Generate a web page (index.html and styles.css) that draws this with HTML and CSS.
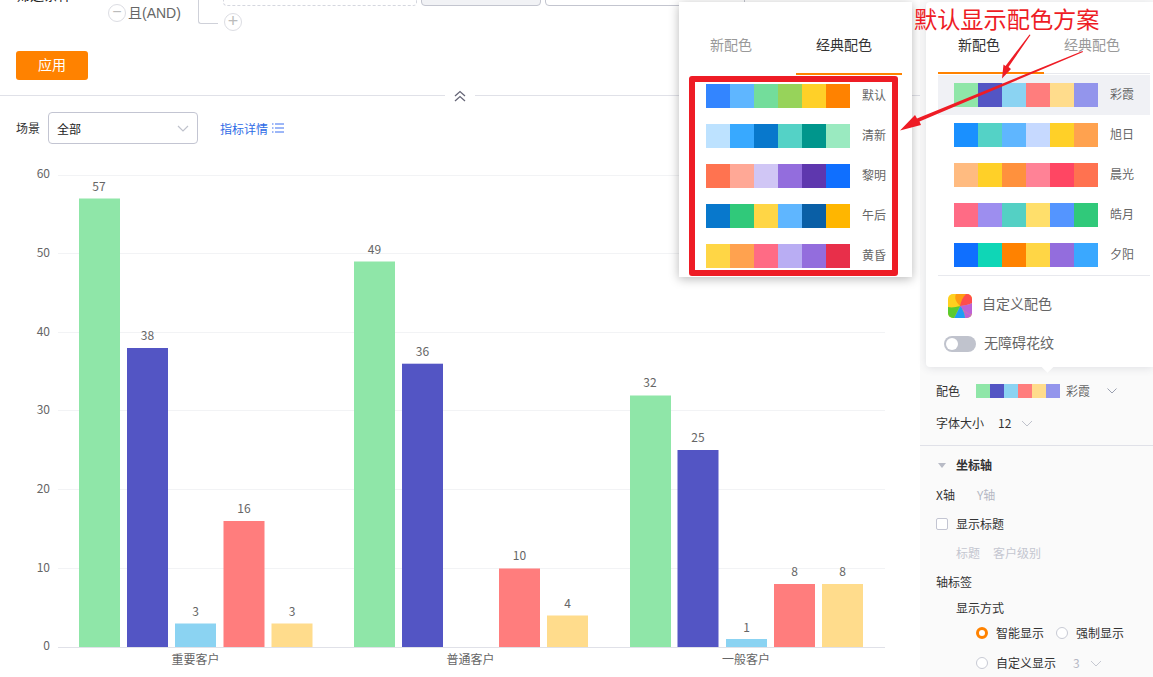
FILE: index.html
```html
<!DOCTYPE html>
<html lang="zh-CN">
<head>
<meta charset="utf-8">
<title>配色方案</title>
<link rel="stylesheet" href="styles.css">
</head>
<body>
<div class="stage">
  <main class="main">
    <section class="topbar">
      <div class="filters">
        <div class="filter-label">筛选条件</div>
        <div class="logic"><span class="circle-btn">−</span><span class="logic-text">且(AND)</span></div>
        <div class="bracket"></div>
        <div class="conditions">
          <div class="cond-row">
            <div class="cond dashed"></div>
            <div class="cond filled"></div>
            <div class="cond outlined"></div>
          </div>
          <span class="circle-btn plus">+</span>
        </div>
      </div>
      <button class="apply">应用</button>
    </section>
    <div class="divider">
      <span class="collapse">
        <svg width="14" height="12" viewBox="0 0 14 12"><path d="M2 6 7 1.500 12 6M2 11 7 6.500 12 11" fill="none" stroke="#667" stroke-width="1.300"/></svg>
      </span>
    </div>
    <div class="toolbar">
      <span class="tool-label">场景</span>
      <div class="select"><span>全部</span>
        <svg class="chev" width="12" height="7" viewBox="0 0 12 7"><path d="M1 1 6 6 11 1" fill="none" stroke="#bfc2cc" stroke-width="1.200"/></svg>
      </div>
      <a class="link">指标详情
        <svg width="12" height="10" viewBox="0 0 12 10"><path d="M3 1h9M3 5h9M3 9h9" stroke="#3a6ff0" fill="none"/><path d="M0 1h1.500M0 5h1.500M0 9h1.500" stroke="#3a6ff0" fill="none"/></svg>
      </a>
    </div>
    <svg class="chart" viewBox="0 150 920 527" width="920" height="527">
      <g class="grid">
        <path d="M58 175.500H885M58 253.500H885M58 332.500H885M58 410.500H885M58 489.500H885M58 568.500H885"/>
      </g>
      <path class="axis" d="M58 647.500H885"/>
      <g class="ticks">
        <text x="50" y="178">60</text><text x="50" y="257">50</text><text x="50" y="336">40</text>
        <text x="50" y="414">30</text><text x="50" y="493">20</text><text x="50" y="572">10</text><text x="50" y="650">0</text>
      </g>
      <g class="s1"><rect x="79" y="198.500" width="41" height="448.500"/><rect x="354" y="261.500" width="41" height="385.500"/><rect x="630" y="395.500" width="41" height="251.500"/></g>
      <g class="s2"><rect x="127" y="348" width="41" height="299"/><rect x="402" y="363.700" width="41" height="283.300"/><rect x="677.500" y="450" width="41" height="197"/></g>
      <g class="s3"><rect x="175" y="623.500" width="41" height="23.500"/><rect x="726" y="639" width="41" height="8"/></g>
      <g class="s4"><rect x="223.500" y="521" width="41" height="126"/><rect x="499" y="568.500" width="41" height="78.500"/><rect x="774" y="584" width="41" height="63"/></g>
      <g class="s5"><rect x="271.500" y="623.500" width="41" height="23.500"/><rect x="547" y="615.500" width="41" height="31.500"/><rect x="822" y="584" width="41" height="63"/></g>
      <g class="vals">
        <text x="99" y="191">57</text><text x="147.500" y="340">38</text><text x="195.500" y="616">3</text><text x="244" y="513">16</text><text x="292" y="616">3</text>
        <text x="374.500" y="254">49</text><text x="422.500" y="356">36</text><text x="519.500" y="560">10</text><text x="567.500" y="608">4</text>
        <text x="650" y="387">32</text><text x="698" y="442">25</text><text x="746.500" y="632">1</text><text x="794.500" y="576">8</text><text x="842.500" y="576">8</text>
      </g>
      <g class="cats"><text x="195.500" y="664">重要客户</text><text x="470.500" y="664">普通客户</text><text x="746" y="664">一般客户</text></g>
    </svg>
  </main>

  <aside class="panel">
    <div class="prow first">
      <span class="plabel">配色</span>
      <span class="swatches mini"><i class="c-a1"></i><i class="c-a2"></i><i class="c-a3"></i><i class="c-a4"></i><i class="c-a5"></i><i class="c-a6"></i></span>
      <span class="pval">彩霞</span>
      <svg class="pchev" width="10" height="6" viewBox="0 0 10 6"><path d="M.5.5 5 5 9.500.5" fill="none" stroke="#9aa0b0"/></svg>
    </div>
    <div class="prow second">
      <span>字体大小</span><span class="fontnum">12</span>
      <svg width="12" height="7" viewBox="0 0 12 7"><path d="M1 1 6 6 11 1" fill="none" stroke="#bfc2cc"/></svg>
    </div>
    <div class="psection">
      <div class="prow head"><span class="tri"></span><strong>坐标轴</strong></div>
      <div class="prow gap10"><span>X轴</span><span class="muted yaxis">Y轴</span></div>
      <div class="prow gap9"><span class="check"></span><span>显示标题</span></div>
      <div class="prow gap9 indent muted-light"><span>标题</span><span class="titleval">客户级别</span></div>
      <div class="prow gap9"><span>轴标签</span></div>
      <div class="prow gap6 indent"><span>显示方式</span></div>
      <div class="prow gap5 indent2">
        <span class="radio on"></span><span class="rlabel">智能显示</span>
        <span class="radio"></span><span>强制显示</span>
      </div>
      <div class="prow gap10 indent2">
        <span class="radio"></span><span class="rlabel">自定义显示</span><span class="muted num3">3</span>
        <svg width="12" height="7" viewBox="0 0 12 7"><path d="M1 1 6 6 11 1" fill="none" stroke="#c6c9d2"/></svg>
      </div>
    </div>
  </aside>

  <div class="pop pop-classic">
    <div class="tabs">
      <span class="tab">新配色</span><span class="tab active">经典配色</span>
    </div>
    <div class="pal"><span class="swatches"><i class="c-b1"></i><i class="c-b2"></i><i class="c-b3"></i><i class="c-b4"></i><i class="c-b5"></i><i class="c-b6"></i></span><span class="pal-name">默认</span></div>
    <div class="pal"><span class="swatches"><i class="c-c1"></i><i class="c-c2"></i><i class="c-c3"></i><i class="c-c4"></i><i class="c-c5"></i><i class="c-c6"></i></span><span class="pal-name">清新</span></div>
    <div class="pal"><span class="swatches"><i class="c-d1"></i><i class="c-d2"></i><i class="c-d3"></i><i class="c-d4"></i><i class="c-d5"></i><i class="c-d6"></i></span><span class="pal-name">黎明</span></div>
    <div class="pal"><span class="swatches"><i class="c-e1"></i><i class="c-e2"></i><i class="c-e3"></i><i class="c-e4"></i><i class="c-e5"></i><i class="c-e6"></i></span><span class="pal-name">午后</span></div>
    <div class="pal"><span class="swatches"><i class="c-f1"></i><i class="c-f2"></i><i class="c-f3"></i><i class="c-f4"></i><i class="c-f5"></i><i class="c-f6"></i></span><span class="pal-name">黄昏</span></div>
  </div>

  <div class="pop pop-new">
    <div class="tabs">
      <span class="tab active">新配色</span><span class="tab">经典配色</span>
    </div>
    <div class="pal selected"><span class="swatches"><i class="c-a1"></i><i class="c-a2"></i><i class="c-a3"></i><i class="c-a4"></i><i class="c-a5"></i><i class="c-a6"></i></span><span class="pal-name">彩霞</span></div>
    <div class="pal"><span class="swatches"><i class="c-g1"></i><i class="c-g2"></i><i class="c-g3"></i><i class="c-g4"></i><i class="c-g5"></i><i class="c-g6"></i></span><span class="pal-name">旭日</span></div>
    <div class="pal"><span class="swatches"><i class="c-h1"></i><i class="c-h2"></i><i class="c-h3"></i><i class="c-h4"></i><i class="c-h5"></i><i class="c-h6"></i></span><span class="pal-name">晨光</span></div>
    <div class="pal"><span class="swatches"><i class="c-j1"></i><i class="c-j2"></i><i class="c-j3"></i><i class="c-j4"></i><i class="c-j5"></i><i class="c-j6"></i></span><span class="pal-name">皓月</span></div>
    <div class="pal"><span class="swatches"><i class="c-k1"></i><i class="c-k2"></i><i class="c-k3"></i><i class="c-k4"></i><i class="c-k5"></i><i class="c-k6"></i></span><span class="pal-name">夕阳</span></div>
    <div class="custom-row">
      <svg width="24" height="24" viewBox="0 0 24 24" class="wheel">
        <defs><clipPath id="wheelclip"><rect width="24" height="24" rx="5"/></clipPath></defs>
        <g clip-path="url(#wheelclip)">
          <rect width="24" height="24" fill="#ffd01f"/>
          <path d="M12 12C8 8 6 4 8 0H18C17 5 15 9 12 12Z" fill="#ff9c12"/>
          <path d="M12 12C13 7 15 3 18 0H24V9C20 11 16 12 12 12Z" fill="#ff4d4d"/>
          <path d="M12 12C16 11 20 11 24 9V21C20 20 15 17 12 12Z" fill="#bd62d6"/>
          <path d="M12 12C15 15 17 20 17 24H24V21C20 20 15 17 12 12Z" fill="#bd62d6"/>
          <path d="M12 12C15 15 17 20 17 24H6C8 20 10 16 12 12Z" fill="#1f9cf5"/>
          <path d="M12 12C10 16 8 20 6 24H0V13C4 14 8 13 12 12Z" fill="#5acb2f"/>
        </g>
      </svg>
      <span class="row-text">自定义配色</span>
    </div>
    <div class="toggle-row"><span class="toggle"><span class="knob"></span></span><span class="row-text">无障碍花纹</span></div>
  </div>
  <span class="caret"></span>

  <div class="note-box"></div>
  <div class="note-text">默认显示配色方案</div>
  <svg class="arrows" width="1153" height="677" viewBox="0 0 1153 677">
    <path d="M1030.500 35 1008.500 67 1011 69 1002 78.500 1003.500 64.500 1005.500 66 1029.500 34.500Z"/>
    <path d="M1083 52 919.500 121.500 921 125 900 130.500 915 115 917 118.500 1082.500 51Z"/>
  </svg>
</div>
</body>
</html>
```
FILE: styles.css
```css
* { box-sizing: border-box; }
html, body { margin: 0; padding: 0; height: 677px; overflow: hidden; background: #fff; }
body { font-family: "Noto Sans CJK SC", "Noto Sans", sans-serif; font-size: 12px; color: #333; }
.stage { position: relative; width: 1153px; height: 677px; overflow: hidden; display: flex; }

.main { width: 920px; flex: none; background: #fff; }
.topbar { height: 95px; padding-left: 16px; overflow: hidden; }
.filters { display: flex; height: 78px; margin-top: -27px; }
.filter-label { width: 92px; font-size: 14px; line-height: 20px; padding-top: 11px; color: #222; }
.logic { width: 90px; display: flex; align-items: center; height: 18px; margin-top: 31px; gap: 2px; }
.logic-text { font-size: 14px; color: #666; padding-bottom: 2px; font-family: "Liberation Sans", "Noto Sans CJK SC", sans-serif; }
.circle-btn { width: 18px; height: 18px; border: 1px solid #dcdde3; border-radius: 50%; color: #bbb; font-size: 16px; line-height: 14px; text-align: center; font-family: "Liberation Sans", sans-serif; flex: none; display: block; }
.bracket { width: 20px; height: 51px; border-left: 1px solid #cfd1d9; border-bottom: 1px solid #cfd1d9; border-bottom-left-radius: 3px; }
.conditions { margin-left: 5px; }
.cond-row { display: flex; gap: 4px; height: 33px; }
.cond { height: 33px; border-radius: 4px; }
.cond.dashed { width: 194px; border: 1px dashed #d5d7df; }
.cond.filled { width: 120px; background: #f1f2f5; border: 1px solid #c3c5cf; }
.cond.outlined { width: 200px; border: 1px solid #c3c5cf; }
.plus { margin: 7px 0 0 1px; font-size: 18px; }
.apply { display: block; width: 72px; height: 29px; background: #ff8200; color: #fff; border: 0; border-radius: 3px; font: 14px "Noto Sans CJK SC", sans-serif; padding: 0 0 4px; }

.divider { height: 1px; background: #e0e1e8; display: flex; justify-content: center; align-items: center; }
.collapse { background: #fff; width: 30px; height: 14px; display: flex; justify-content: center; align-items: center; }

.toolbar { display: flex; align-items: center; height: 32px; margin-top: 16px; padding-left: 16px; }
.tool-label { width: 32px; font-size: 12px; padding-bottom: 2px; }
.select { width: 150px; height: 32px; border: 1px solid #c3c5d2; border-radius: 4px; padding: 0 8px; display: flex; justify-content: space-between; align-items: center; color: #222; }
.link { margin-left: 22px; color: #2e6be6; display: flex; align-items: center; gap: 4px; }

.chart { display: block; margin-top: 6px; }
.grid path { stroke: #f2f3f5; fill: none; }
.axis { stroke: #e0e1e8; fill: none; }
.chart text { font-family: "Noto Sans CJK SC", sans-serif; font-size: 12px; fill: #666; }
.ticks text { text-anchor: end; }
.vals text, .cats text { text-anchor: middle; }
.s1 { fill: #8fe6a8; }
.s2 { fill: #5355c4; }
.s3 { fill: #8bd3f2; }
.s4 { fill: #ff7d7d; }
.s5 { fill: #ffdc8c; }

.panel { width: 233px; flex: none; background: #fafafa; padding-top: 381px; }
.prow { display: flex; align-items: center; height: 20px; padding-left: 16px; color: #333; }
.prow > span, .prow > strong { padding-bottom: 2px; }
.second { margin-top: 12px; }
.plabel { width: 40px; }
.swatches { display: flex; flex: none; }
.swatches i { display: block; width: 24px; height: 24px; }
.swatches.mini i { width: 14px; height: 14px; }
.prow > .swatches, .prow > .tri, .prow > .check, .prow > .radio { padding: 0; }
.pval { margin-left: 6px; color: #666; }
.pchev { margin-left: 17px; }
.fontnum { margin-left: 14px; margin-right: 10px; }
.psection { margin-top: 12px; border-top: 1px solid #e0e1e8; padding-top: 9px; }
.head { padding-left: 18px; }
.head strong { margin-left: 10px; font-weight: 700; }
.tri { width: 0; height: 0; border: 4px solid transparent; border-top: 5px solid #b8bbc6; border-bottom: 0; }
.gap10 { margin-top: 10px; }
.gap9 { margin-top: 9px; }
.gap6 { margin-top: 6px; }
.gap5 { margin-top: 5px; }
.muted { color: #b5b8c4; }
.yaxis { margin-left: 22px; }
.check { width: 12px; height: 12px; border: 1px solid #c3c5d2; border-radius: 2px; background: #fff; margin-right: 8px; }
.indent { padding-left: 36px; }
.indent2 { padding-left: 56px; }
.muted-light { color: #c4c6d0; }
.titleval { margin-left: 13px; }
.radio { width: 12px; height: 12px; border: 1px solid #c8cad4; border-radius: 50%; background: #fff; margin-right: 8px; flex: none; }
.radio.on { border: 3px solid #ff8200; }
.rlabel { margin-right: 12px; }
.num3 { margin-left: 5px; margin-right: 10px; }

.pop { position: absolute; background: #fff; overflow: hidden; }
.pop-classic { left: 679px; top: 2px; width: 233px; height: 275px; padding: 0 10px 0 11px; box-shadow: 0 2px 10px rgba(0,0,0,.28); }
.pop-new { left: 926px; top: 2px; width: 227px; height: 365px; padding-left: 12px; box-shadow: 0 1px 8px rgba(60,65,90,.14); border-radius: 4px 0 0 4px; }
.tabs { display: flex; height: 73px; align-items: stretch; width: 212px; margin-bottom: 1px; }
.pop-new .tabs { height: 72px; border-bottom: 1px solid #e8e9ee; }
.tab { width: 106px; padding: 32px 0 0 20px; font-size: 14px; line-height: 20px; color: #999; border-bottom: 2px solid transparent; }
.tab.active { color: #333; border-bottom-color: #ff8200; }
.pop-new .tab { margin-bottom: -1px; }
.pal { display: flex; align-items: center; gap: 12px; height: 40px; padding-left: 16px; width: 212px; color: #666; flex: none; }
.pal-name { padding-bottom: 4px; }
.pal.selected { background: #f0f1f5; }
.custom-row { position: relative; display: flex; align-items: center; gap: 11px; margin: 19px 0 0 10px; height: 24px; font-size: 14px; color: #666; }
.custom-row::before { content: ""; position: absolute; left: -10px; top: -19px; width: 212px; height: 1px; background: #e8e9ee; }
.custom-row .row-text { padding-bottom: 6px; margin-left: -1px; }
.toggle-row { display: flex; align-items: center; gap: 8px; margin: 18px 0 0 6px; height: 16px; font-size: 14px; color: #666; }
.toggle-row .row-text { padding-bottom: 4px; }
.toggle { width: 32px; height: 16px; border-radius: 8px; background: #c0c3cd; padding: 2px; display: block; }
.knob { display: block; width: 12px; height: 12px; border-radius: 50%; background: #fff; }
.caret { position: absolute; left: 1043px; top: 362px; width: 9px; height: 9px; background: #fff; transform: rotate(45deg); }

.note-box { position: absolute; left: 689px; top: 76px; width: 209px; height: 200px; border: 6px solid #ee1c25; border-radius: 3px; }
.note-text { position: absolute; left: 914px; top: 1px; font-size: 23.200px; line-height: 34px; color: #ee1c25; white-space: nowrap; }
.arrows { position: absolute; left: 0; top: 0; fill: #ee1c25; pointer-events: none; }

.c-a1 { background: #8fe6a8; } .c-a2 { background: #5355c4; } .c-a3 { background: #8bd3f2; } .c-a4 { background: #ff7d7d; } .c-a5 { background: #ffdc8c; } .c-a6 { background: #9395ec; }
.c-b1 { background: #3385ff; } .c-b2 { background: #5fb6ff; } .c-b3 { background: #73dd9b; } .c-b4 { background: #97d35a; } .c-b5 { background: #ffd028; } .c-b6 { background: #ff8200; }
.c-c1 { background: #bde2ff; } .c-c2 { background: #38a9ff; } .c-c3 { background: #0878cc; } .c-c4 { background: #54d2c6; } .c-c5 { background: #00968c; } .c-c6 { background: #9aeac0; }
.c-d1 { background: #ff7350; } .c-d2 { background: #ffa896; } .c-d3 { background: #d0c6f5; } .c-d4 { background: #936ddd; } .c-d5 { background: #5e37ae; } .c-d6 { background: #0f6fff; }
.c-e1 { background: #0878cc; } .c-e2 { background: #30c97a; } .c-e3 { background: #ffd645; } .c-e4 { background: #5fb6ff; } .c-e5 { background: #0a5fa6; } .c-e6 { background: #ffb600; }
.c-f1 { background: #ffd645; } .c-f2 { background: #ffa24f; } .c-f3 { background: #ff6b85; } .c-f4 { background: #b9adf3; } .c-f5 { background: #936ddd; } .c-f6 { background: #e82f4a; }
.c-g1 { background: #1a90ff; } .c-g2 { background: #54d2c6; } .c-g3 { background: #5fb6ff; } .c-g4 { background: #c6d9ff; } .c-g5 { background: #ffd028; } .c-g6 { background: #ffa24f; }
.c-h1 { background: #ffbb80; } .c-h2 { background: #ffd028; } .c-h3 { background: #ff913d; } .c-h4 { background: #ff8296; } .c-h5 { background: #ff4663; } .c-h6 { background: #ff7250; }
.c-j1 { background: #ff6b85; } .c-j2 { background: #9d8eef; } .c-j3 { background: #54d0c4; } .c-j4 { background: #ffdf6b; } .c-j5 { background: #5495ff; } .c-j6 { background: #30c97a; }
.c-k1 { background: #0f6fff; } .c-k2 { background: #0fd6b6; } .c-k3 { background: #ff8200; } .c-k4 { background: #ffd645; } .c-k5 { background: #936ddd; } .c-k6 { background: #3aa8ff; }
```
